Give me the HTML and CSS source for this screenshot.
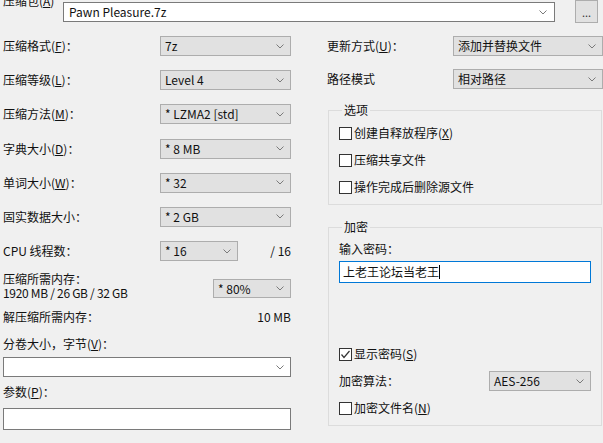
FILE: index.html
```html
<!DOCTYPE html>
<html>
<head>
<meta charset="utf-8">
<link rel="stylesheet" href="styles.css">
</head>
<body>
<div class="dialog">
  <div class="top">
    <span class="archive-label">压缩包(<u>A</u>)</span>
    <div class="combo edit archive"><span>Pawn Pleasure.7z</span><svg class="chev" width="8" height="5" viewBox="0 0 8 5"><polyline points="0.5,0.5 4,4 7.5,0.5" /></svg></div>
    <div class="browse">...</div>
  </div>
  <div class="main">
    <div class="left">
      <div class="rows">
        <div class="row"><span class="lbl">压缩格式(<u>F</u>)：</span><div class="combo sel w131"><span>7z</span><svg class="chev" width="8" height="5" viewBox="0 0 8 5"><polyline points="0.5,0.5 4,4 7.5,0.5" /></svg></div></div>
        <div class="row"><span class="lbl">压缩等级(<u>L</u>)：</span><div class="combo sel w131"><span>Level 4</span><svg class="chev" width="8" height="5" viewBox="0 0 8 5"><polyline points="0.5,0.5 4,4 7.5,0.5" /></svg></div></div>
        <div class="row"><span class="lbl">压缩方法(<u>M</u>)：</span><div class="combo sel w131"><span>* LZMA2 [std]</span><svg class="chev" width="8" height="5" viewBox="0 0 8 5"><polyline points="0.5,0.5 4,4 7.5,0.5" /></svg></div></div>
        <div class="row"><span class="lbl">字典大小(<u>D</u>)：</span><div class="combo sel w131"><span>* 8 MB</span><svg class="chev" width="8" height="5" viewBox="0 0 8 5"><polyline points="0.5,0.5 4,4 7.5,0.5" /></svg></div></div>
        <div class="row"><span class="lbl">单词大小(<u>W</u>)：</span><div class="combo sel w131"><span>* 32</span><svg class="chev" width="8" height="5" viewBox="0 0 8 5"><polyline points="0.5,0.5 4,4 7.5,0.5" /></svg></div></div>
        <div class="row"><span class="lbl">固实数据大小：</span><div class="combo sel w131"><span>* 2 GB</span><svg class="chev" width="8" height="5" viewBox="0 0 8 5"><polyline points="0.5,0.5 4,4 7.5,0.5" /></svg></div></div>
        <div class="row"><span class="lbl">CPU 线程数：</span><div class="combo sel w78"><span>* 16</span><svg class="chev" width="8" height="5" viewBox="0 0 8 5"><polyline points="0.5,0.5 4,4 7.5,0.5" /></svg></div><span class="grow right">/ 16</span></div>
      </div>
      <div class="mem-row">
        <div class="mem-lbl"><div class="mem-l1">压缩所需内存：</div><div class="mem-l2">1920 MB / 26 GB / 32 GB</div></div>
        <div class="combo sel w78 mem-sel"><span>* 80%</span><svg class="chev" width="8" height="5" viewBox="0 0 8 5"><polyline points="0.5,0.5 4,4 7.5,0.5" /></svg></div>
      </div>
      <div class="text-row decomp"><span>解压缩所需内存：</span><span>10 MB</span></div>
      <div class="line split-lbl">分卷大小，字节(<u>V</u>)：</div>
      <div class="combo edit full split-sel"><span></span><svg class="chev" width="8" height="5" viewBox="0 0 8 5"><polyline points="0.5,0.5 4,4 7.5,0.5" /></svg></div>
      <div class="line param-lbl">参数(<u>P</u>)：</div>
      <div class="edit-box full param-box"></div>
    </div>
    <div class="right">
      <div class="row"><span class="rlbl">更新方式(<u>U</u>)：</span><div class="combo sel w150"><span>添加并替换文件</span><svg class="chev" width="8" height="5" viewBox="0 0 8 5"><polyline points="0.5,0.5 4,4 7.5,0.5" /></svg></div></div>
      <div class="row row2"><span class="rlbl">路径模式</span><div class="combo sel w150"><span>相对路径</span><svg class="chev" width="8" height="5" viewBox="0 0 8 5"><polyline points="0.5,0.5 4,4 7.5,0.5" /></svg></div></div>
      <fieldset class="group options">
        <legend>选项</legend>
        <div class="check"><span class="box"></span><span>创建自释放程序(<u>X</u>)</span></div>
        <div class="check"><span class="box"></span><span>压缩共享文件</span></div>
        <div class="check"><span class="box"></span><span>操作完成后删除源文件</span></div>
      </fieldset>
      <fieldset class="group crypt">
        <legend>加密</legend>
        <div class="line">输入密码：</div>
        <div class="edit-box pw"><span>上老王论坛当老王</span><span class="caret"></span></div>
        <div class="check show-pw"><span class="box"><svg width="11" height="11" viewBox="0 0 11 11"><polyline points="1.5,5.5 4,8.5 9.5,2" /></svg></span><span>显示密码(<u>S</u>)</span></div>
        <div class="row algo"><span class="grow">加密算法：</span><div class="combo sel w102"><span>AES-256</span><svg class="chev" width="8" height="5" viewBox="0 0 8 5"><polyline points="0.5,0.5 4,4 7.5,0.5" /></svg></div></div>
        <div class="check enc-names"><span class="box"></span><span>加密文件名(<u>N</u>)</span></div>
      </fieldset>
    </div>
  </div>
</div>
</body>
</html>
```

FILE: styles.css
```css
html, body {
  margin: 0;
  padding: 0;
  background: #f0f0f0;
  overflow: hidden;
}
body {
  font-family: "Noto Sans CJK SC", "Noto Sans", sans-serif;
  font-size: 12px;
  line-height: 14px;
  color: #111;
  width: 603px;
  height: 443px;
}
u { text-decoration: underline; text-underline-offset: 1px; }

.top {
  display: flex;
  align-items: flex-start;
  height: 24px;
}
.archive-label {
  width: 60px;
  padding-left: 3px;
  margin-top: -6px;
}
.combo {
  box-sizing: border-box;
  display: flex;
  align-items: center;
  justify-content: space-between;
  height: 20px;
  padding: 0 6px 0 4px;
  white-space: nowrap;
}
.combo.sel {
  background: #e1e1e1;
  border: 1px solid #adadad;
}
.combo.edit {
  background: #fff;
  border: 1px solid #7a7a7a;
}
.chev {
  flex: none;
  fill: none;
  stroke: #7a7a7a;
  stroke-width: 1;
}
.archive {
  width: 492px;
  margin-top: 2px;
  padding-left: 5px;
  padding-right: 7px;
}
.browse {
  box-sizing: border-box;
  width: 23px;
  height: 23px;
  margin-left: 20px;
  background: #e1e1e1;
  border: 1px solid #adadad;
  text-align: center;
  line-height: 22px;
  font-size: 11px;
  color: #333;
}

.main {
  display: flex;
  margin-top: 12px;
}
.left {
  width: 288px;
  padding-left: 3px;
}
.rows {
  display: flex;
  flex-direction: column;
  gap: 14.2px;
}
.row {
  display: flex;
  align-items: center;
  height: 20px;
}
.lbl {
  width: 157px;
  flex: none;
}
.w131 { width: 131px; }
.w78 { width: 78px; }
.w150 { width: 152px; }
.w102 { width: 102px; }
.grow { flex: 1; }
.right { text-align: right; }

.mem-row {
  display: flex;
  justify-content: space-between;
  align-items: flex-start;
  margin-top: 11px;
}
.mem-l1 { height: 14px; }
.mem-l2 {
  letter-spacing: -0.3px;
  height: 14px;
}
.mem-sel {
  margin-top: 7px;
  height: 19px;
}
.text-row {
  display: flex;
  justify-content: space-between;
}
.decomp { margin-top: 10px; }
.split-lbl { margin-top: 13px; }
.full { width: 288px; }
.split-sel { margin-top: 6px; }
.param-lbl { margin-top: 8px; }
.edit-box {
  box-sizing: border-box;
  background: #fff;
  border: 1px solid #7a7a7a;
}
.param-box {
  margin-top: 9px;
  height: 22px;
}

.main > .right {
  text-align: left;
  width: 276px;
  margin-left: 36px;
}
.rlbl {
  width: 126px;
  flex: none;
}
.row2 { margin-top: 13px; }

.group {
  margin: 0 0 0 1px;
  width: 274px;
  box-sizing: border-box;
  border: 1px solid #dcdcdc;
  padding: 0 10px;
  min-width: 0;
}
.group legend {
  padding: 0 2px;
  margin-left: 3px;
  line-height: 14px;
}
.options {
  margin-top: 14px;
  padding-top: 9px;
  padding-bottom: 10px;
}
.check {
  display: flex;
  align-items: center;
  height: 14px;
}
.options .check + .check { margin-top: 13px; }
.box {
  box-sizing: border-box;
  width: 13px;
  height: 13px;
  border: 1px solid #333;
  background: #fff;
  margin-right: 2px;
  flex: none;
  display: flex;
  align-items: center;
  justify-content: center;
}
.box svg {
  fill: none;
  stroke: #333;
  stroke-width: 1.2;
}
.crypt {
  margin-top: 15px;
  padding-top: 8px;
  padding-bottom: 10px;
}
.pw {
  margin-top: 5px;
  height: 22px;
  width: 252px;
  border-color: #0078d7;
  display: flex;
  align-items: center;
  padding-left: 3px;
}
.caret {
  display: inline-block;
  width: 1px;
  height: 14px;
  background: #000;
}
.show-pw { margin-top: 64px; }
.algo { margin-top: 10px; }
.enc-names { margin-top: 10px; }
```
